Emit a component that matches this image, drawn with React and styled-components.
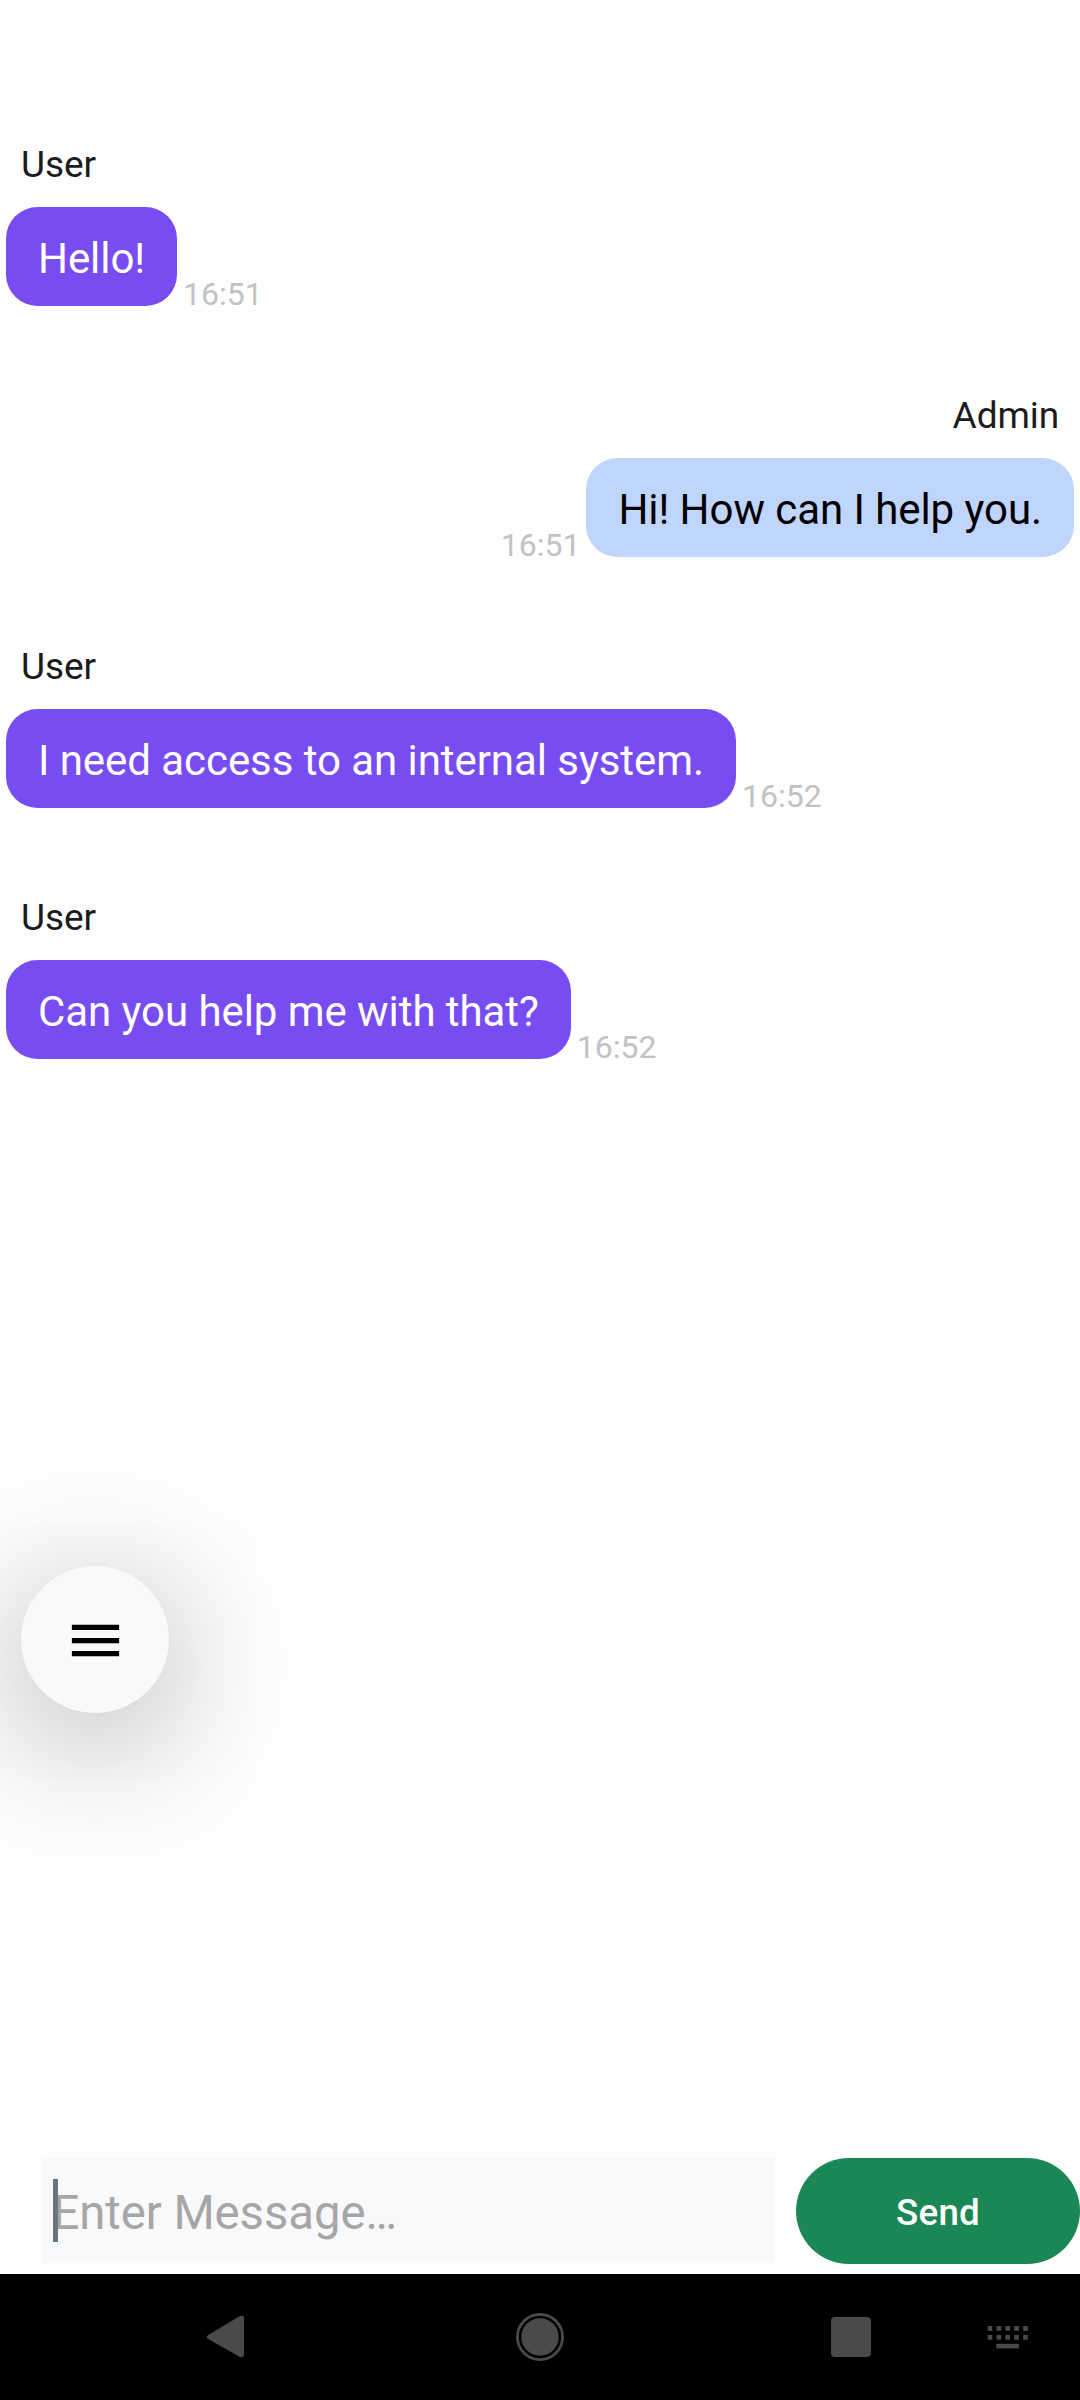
import React from "react";
import styled, { createGlobalStyle } from "styled-components";

const GlobalStyle = createGlobalStyle`
  *, *::before, *::after { box-sizing: border-box; }
  body {
    margin: 0;
    background: #fefefe;
    font-family: Roboto, "Noto Sans", sans-serif;
  }
`;

const Screen = styled.div`
  position: relative;
  display: flex;
  flex-direction: column;
  width: 1080px;
  height: 2400px;
  overflow: hidden;
  background: #fefefe;
`;

const Messages = styled.main`
  flex: 1;
  display: flex;
  flex-direction: column;
  gap: 53px;
  padding: 108px 6px 0;
`;

const Message = styled.article`
  display: flex;
  flex-direction: column;
  align-items: ${(p) => (p.$own ? "flex-end" : "flex-start")};
  height: 198px;
`;

const Author = styled.div`
  height: 99px;
  padding: 30px 15px 0;
  font-size: 37px;
  line-height: 53px;
  letter-spacing: -0.1px;
  color: #1b1b1d;
`;

const BubbleRow = styled.div`
  display: flex;
  flex-direction: ${(p) => (p.$own ? "row-reverse" : "row")};
  align-items: flex-end;
  gap: 6px;
`;

const Bubble = styled.div`
  height: 99px;
  padding: 20px 32px 0;
  border-radius: 31.5px;
  font-size: 42px;
  line-height: 63px;
  letter-spacing: -0.06px;
  white-space: nowrap;
  color: ${(p) => (p.$own ? "#000000" : "#ffffff")};
  background: ${(p) => (p.$own ? "#c0d5fb" : "#774df2")};
`;

const Time = styled.time`
  font-size: 32px;
  line-height: 24px;
  color: #c2c2c2;
`;

const MenuButton = styled.button`
  position: absolute;
  left: 21px;
  top: 1566px;
  display: flex;
  align-items: center;
  justify-content: center;
  width: 148px;
  height: 147px;
  padding: 1px 0 0;
  border: 0;
  border-radius: 50%;
  background: #f8f9fb;
  box-shadow: 0 26px 138px rgba(0, 0, 0, 0.34);
`;

const Composer = styled.form`
  display: flex;
  gap: 21px;
  height: 116px;
  padding-left: 42px;
`;

const Field = styled.div`
  position: relative;
  width: 733px;
  height: 105px;
  padding: 22px 10.5px;
  font-size: 47.25px;
  line-height: 66px;
  letter-spacing: -0.05px;
  background: #f8f9fb;
`;

const Caret = styled.span`
  position: absolute;
  left: 11px;
  top: 21px;
  width: 5px;
  height: 63px;
  background: #6c757d;
`;

const Placeholder = styled.span`
  color: #a6a6a7;
`;

const SendButton = styled.button`
  width: 284px;
  height: 106px;
  padding: 2px 0 0;
  border: 0;
  border-radius: 53px;
  font-family: inherit;
  font-size: 36.75px;
  font-weight: 500;
  letter-spacing: 0.26px;
  color: #ffffff;
  background: #1a8754;
`;

const NavBar = styled.nav`
  display: flex;
  align-items: center;
  height: 126px;
  padding-left: 203px;
  background: #000000;
`;

const NavIcon = styled.svg`
  width: 48px;
  height: 48px;
  margin-right: ${(p) => p.$after || 0}px;
  fill: #4a4a4a;
`;

const messages = [
  { author: "User", text: "Hello!", time: "16:51" },
  { author: "Admin", text: "Hi! How can I help you.", time: "16:51", own: true },
  { author: "User", text: "I need access to an internal system.", time: "16:52" },
  { author: "User", text: "Can you help me with that?", time: "16:52" },
];

const keyColumns = [0, 1, 2, 3, 4];

export default function App() {
  return (
    <>
      <GlobalStyle />
      <Screen>
        <Messages>
          {messages.map((m) => (
            <Message key={m.text} $own={m.own}>
              <Author>{m.author}</Author>
              <BubbleRow $own={m.own}>
                <Bubble $own={m.own}>{m.text}</Bubble>
                <Time>{m.time}</Time>
              </BubbleRow>
            </Message>
          ))}
        </Messages>

        <MenuButton aria-label="Menu">
          <svg width="63" height="63" viewBox="0 0 24 24">
            <path d="M3 18h18v-2H3v2zm0-5h18v-2H3v2zm0-7v2h18V6H3z" />
          </svg>
        </MenuButton>

        <Composer>
          <Field>
            <Caret />
            <Placeholder>Enter Message…</Placeholder>
          </Field>
          <SendButton type="button">Send</SendButton>
        </Composer>

        <NavBar>
          <NavIcon viewBox="0 0 48 48" $after={265}>
            <path d="M5.2 22 36.5 3.3Q41 1.5 41 5.5V41.5Q41 45.5 36.5 43.7L5.2 26Q2.4 24 5.2 22Z" />
          </NavIcon>
          <NavIcon viewBox="0 0 48 48" $after={263}>
            <circle cx="24" cy="24" r="22.6" fill="none" stroke="#4a4a4a" strokeWidth="2.7" />
            <circle cx="24" cy="24" r="18.7" />
          </NavIcon>
          <NavIcon viewBox="0 0 48 48" $after={109}>
            <rect x="4" y="4" width="40" height="40" rx="4" />
          </NavIcon>
          <NavIcon viewBox="0 0 48 48">
            {keyColumns.map((c) => (
              <React.Fragment key={c}>
                <rect x={3.7 + c * 8.87} y="13" width="4.6" height="4.8" />
                <rect x={3.7 + c * 8.87} y="21.9" width="4.6" height="4.8" />
              </React.Fragment>
            ))}
            <rect x="12.3" y="30.8" width="22.6" height="4.6" />
          </NavIcon>
        </NavBar>
      </Screen>
    </>
  );
}
